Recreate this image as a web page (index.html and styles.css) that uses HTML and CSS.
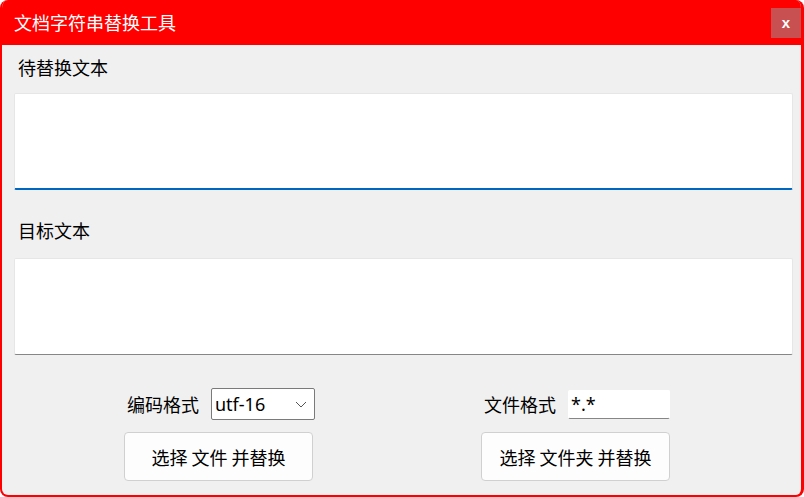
FILE: index.html
```html
<!DOCTYPE html>
<html lang="zh-CN">
<head>
    <meta charset="UTF-8">
    <title>文档字符串替换工具</title>
    <link rel="stylesheet" href="styles.css">
</head>
<body>

<div class="window">
    <div class="titlebar">
        <span class="title">文档字符串替换工具</span>
        <button class="close">x</button>
    </div>

    <div class="content">
        <div class="label first">待替换文本</div>
        <textarea class="box focused"></textarea>

        <div class="label second">目标文本</div>
        <textarea class="box target"></textarea>

        <div class="actions">
            <div class="group">
                <div class="field-row">
                    <span class="field-label">编码格式</span>
                    <div class="select">
                        <span>utf-16</span>
                        <svg width="12" height="7" viewBox="0 0 12 7">
                            <path d="M1 1 L6 6 L11 1" fill="none" stroke="#555" stroke-width="1"/>
                        </svg>
                    </div>
                </div>
                <button class="action">选择 文件 并替换</button>
            </div>

            <div class="group right">
                <div class="field-row">
                    <span class="field-label">文件格式</span>
                    <input class="pattern" type="text" value="*.*">
                </div>
                <button class="action">选择 文件夹 并替换</button>
            </div>
        </div>
    </div>
</div>

</body>
</html>
```

FILE: styles.css
```css
* {
    box-sizing: border-box;
}

html, body {
    margin: 0;
    background-color: #fff;
}

body {
    font-family: "Noto Sans CJK SC", "Noto Sans", sans-serif;
    color: #000;
}

.window {
    width: 804px;
    height: 497px;
    background-color: #f0f0f0;
    border: 2px solid #ff0000;
    border-top: none;
    border-right-width: 3px;
    border-radius: 8px;
    overflow: hidden;
}

.titlebar {
    height: 45px;
    background-color: #ff0000;
    display: flex;
    align-items: center;
    justify-content: space-between;
    padding-left: 12px;
}

.title {
    color: #fff;
    font-size: 18px;
    line-height: 24px;
    margin-top: -1px;
}

.close {
    width: 30px;
    height: 30px;
    margin-top: 1px;
    border: none;
    background-color: #c85050;
    color: #fff;
    font-family: "Liberation Sans", Arial, sans-serif;
    font-weight: bold;
    font-size: 15px;
    padding: 0 0 2px;
}

.content {
    padding: 0 8px 0 12px;
}

.label {
    font-size: 18px;
    line-height: 25px;
    padding-left: 4px;
}

.label.first {
    margin-top: 10px;
}

.label.second {
    margin-top: 28px;
}

.box {
    display: block;
    width: 100%;
    height: 97px;
    margin-top: 13px;
    resize: none;
    background-color: #fff;
    border: 1px solid #e6e6e6;
    border-bottom: 1px solid #868686;
    border-radius: 2px;
    outline: none;
}

.box.focused {
    border-bottom: 2px solid #0067c0;
}

.box.target {
    margin-top: 15px;
}

.actions {
    display: flex;
    gap: 166px;
    padding-left: 110px;
    margin-top: 33px;
}

.group {
    width: 191px;
}

.field-row {
    display: flex;
    align-items: center;
    height: 32px;
    padding-left: 3px;
}

.field-label {
    font-size: 18px;
    margin-right: 12px;
}

.select {
    width: 104px;
    height: 32px;
    background-color: #fff;
    border: 1px solid #7a7a7a;
    border-radius: 2px;
    display: flex;
    align-items: center;
    justify-content: space-between;
    padding: 0 7px 0 3px;
    font-family: "Noto Sans", sans-serif;
    font-size: 18px;
}

.pattern {
    width: 102px;
    height: 29px;
    background-color: #fff;
    border: 1px solid #fff;
    border-bottom: 1px solid #868686;
    border-radius: 2px;
    padding: 0 2px;
    font-family: "Noto Sans", sans-serif;
    font-size: 18px;
    outline: none;
}

.action {
    display: block;
    width: 189px;
    height: 49px;
    margin-top: 12px;
    background-color: #fdfdfd;
    border: 1px solid #d0d0d0;
    border-radius: 4px;
    font-family: "Noto Sans CJK SC", "Noto Sans", sans-serif;
    font-size: 18px;
    color: #000;
}
```
